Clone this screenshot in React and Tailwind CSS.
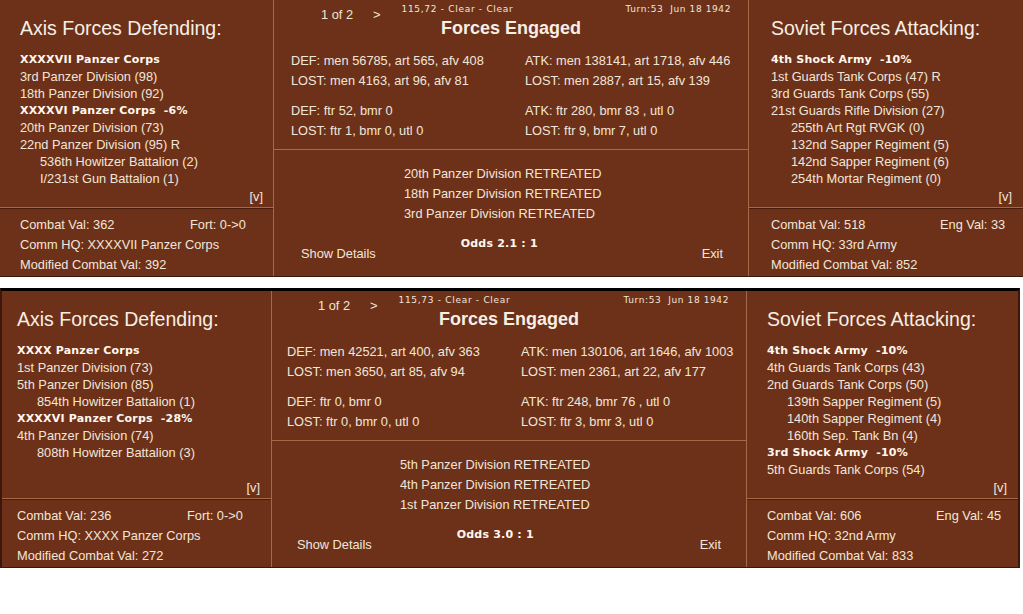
import React from "react";

const SANS = "font-['Liberation_Sans',Arial,sans-serif]";
const VERD = "font-['DejaVu_Sans',Verdana,sans-serif]";
const LIGHT = "border-[#a26a48]";

const data = [
  {
    a: true,
    def: {
      title: "Axis Forces Defending:",
      items: [
        { t: "XXXXVII Panzer Corps", b: 1 },
        { t: "3rd Panzer Division (98)" },
        { t: "18th Panzer Division (92)" },
        { t: "XXXXVI Panzer Corps  -6%", b: 1 },
        { t: "20th Panzer Division (73)" },
        { t: "22nd Panzer Division (95) R" },
        { t: "536th Howitzer Battalion (2)", i: 1 },
        { t: "I/231st Gun Battalion (1)", i: 1 },
      ],
      l1: "Combat Val: 362",
      l1b: "Fort: 0->0",
      hq: "Comm HQ: XXXXVII Panzer Corps",
      mod: "Modified Combat Val: 392",
    },
    atk: {
      title: "Soviet Forces Attacking:",
      items: [
        { t: "4th Shock Army  -10%", b: 1 },
        { t: "1st Guards Tank Corps (47) R" },
        { t: "3rd Guards Tank Corps (55)" },
        { t: "21st Guards Rifle Division (27)" },
        { t: "255th Art Rgt RVGK (0)", i: 1 },
        { t: "132nd Sapper Regiment (5)", i: 1 },
        { t: "142nd Sapper Regiment (6)", i: 1 },
        { t: "254th Mortar Regiment (0)", i: 1 },
      ],
      l1: "Combat Val: 518",
      l1b: "Eng Val: 33",
      hq: "Comm HQ: 33rd Army",
      mod: "Modified Combat Val: 852",
    },
    hex: "115,72 - Clear - Clear",
    stats: [
      ["DEF: men 56785, art 565, afv 408", "ATK: men 138141, art 1718, afv 446"],
      ["LOST: men 4163, art 96, afv 81", "LOST: men 2887, art 15, afv 139"],
      ["DEF: ftr 52, bmr 0", "ATK: ftr 280, bmr 83 , utl 0"],
      ["LOST: ftr 1, bmr 0, utl 0", "LOST: ftr 9, bmr 7, utl 0"],
    ],
    retreats: [
      "20th Panzer Division RETREATED",
      "18th Panzer Division RETREATED",
      "3rd Panzer Division RETREATED",
    ],
    odds: "Odds 2.1 : 1",
  },
  {
    a: false,
    def: {
      title: "Axis Forces Defending:",
      items: [
        { t: "XXXX Panzer Corps", b: 1 },
        { t: "1st Panzer Division (73)" },
        { t: "5th Panzer Division (85)" },
        { t: "854th Howitzer Battalion (1)", i: 1 },
        { t: "XXXXVI Panzer Corps  -28%", b: 1 },
        { t: "4th Panzer Division (74)" },
        { t: "808th Howitzer Battalion (3)", i: 1 },
      ],
      l1: "Combat Val: 236",
      l1b: "Fort: 0->0",
      hq: "Comm HQ: XXXX Panzer Corps",
      mod: "Modified Combat Val: 272",
    },
    atk: {
      title: "Soviet Forces Attacking:",
      items: [
        { t: "4th Shock Army  -10%", b: 1 },
        { t: "4th Guards Tank Corps (43)" },
        { t: "2nd Guards Tank Corps (50)" },
        { t: "139th Sapper Regiment (5)", i: 1 },
        { t: "140th Sapper Regiment (4)", i: 1 },
        { t: "160th Sep. Tank Bn (4)", i: 1 },
        { t: "3rd Shock Army  -10%", b: 1 },
        { t: "5th Guards Tank Corps (54)" },
      ],
      l1: "Combat Val: 606",
      l1b: "Eng Val: 45",
      hq: "Comm HQ: 32nd Army",
      mod: "Modified Combat Val: 833",
    },
    hex: "115,73 - Clear - Clear",
    stats: [
      ["DEF: men 42521, art 400, afv 363", "ATK: men 130106, art 1646, afv 1003"],
      ["LOST: men 3650, art 85, afv 94", "LOST: men 2361, art 22, afv 177"],
      ["DEF: ftr 0, bmr 0", "ATK: ftr 248, bmr 76 , utl 0"],
      ["LOST: ftr 0, bmr 0, utl 0", "LOST: ftr 3, bmr 3, utl 0"],
    ],
    retreats: [
      "5th Panzer Division RETREATED",
      "4th Panzer Division RETREATED",
      "1st Panzer Division RETREATED",
    ],
    odds: "Odds 3.0 : 1",
  },
];

function Item({ it }) {
  if (it.b) {
    return (
      <div
        className={`${VERD} whitespace-pre text-[11px] font-bold leading-[17px] tracking-[0.2px] text-[#fff7ee]`}
      >
        {it.t}
      </div>
    );
  }
  return (
    <div
      className={`${SANS} whitespace-pre text-[12.8px] leading-[17px] ${it.i ? "pl-[20px]" : ""}`}
    >
      {it.t}
    </div>
  );
}

function Side({ d, w, pl, vpr, w1 }) {
  return (
    <div className={`flex shrink-0 flex-col ${w}`}>
      <div className={`flex h-[208px] flex-col border-b ${LIGHT} ${pl}`}>
        <div className={`${SANS} pt-[16px] text-[19.5px] leading-[24px] text-[#f7eee4]`}>
          {d.title}
        </div>
        <div className="mt-[11px] flex flex-col">
          {d.items.map((it, k) => (
            <Item key={k} it={it} />
          ))}
        </div>
        <div
          className={`${SANS} mt-auto self-end pb-[2px] text-[12.8px] leading-[17px] ${vpr}`}
        >
          [v]
        </div>
      </div>
      <div
        className={`flex flex-1 flex-col border-t border-[#4a1c0a] pt-[6px] ${SANS} text-[12.8px] leading-[20px] ${pl}`}
      >
        <div className="flex whitespace-pre">
          <span className={w1}>{d.l1}</span>
          <span>{d.l1b}</span>
        </div>
        <div className="whitespace-pre">{d.hq}</div>
        <div className="whitespace-pre">{d.mod}</div>
      </div>
    </div>
  );
}

function Center({ p }) {
  const a = p.a;
  return (
    <div className={`flex w-[476px] shrink-0 flex-col border-x ${LIGHT}`}>
      <div className={`flex h-[150px] flex-col border-b ${LIGHT}`}>
        <div className="flex h-[17px] items-start">
          <div
            className={`${SANS} flex pt-[7px] text-[12.8px] leading-[16px] ${a ? "pl-[47px]" : "pl-[46px]"}`}
          >
            <span>1 of 2</span>
            <span className="ml-[20px]">&gt;</span>
          </div>
          <div
            className={`${VERD} ml-[21px] whitespace-pre pt-[3px] text-[9px] leading-[12px] tracking-[0.7px]`}
          >
            {p.hex}
          </div>
          <div className="flex-1" />
          <div
            className={`${VERD} whitespace-pre pr-[17px] pt-[3px] text-[9px] leading-[12px] tracking-[0.6px]`}
          >
            {"Turn:53  Jun 18 1942"}
          </div>
        </div>
        <div className={`${SANS} text-center text-[18px] font-bold leading-[22px] text-[#f7eee4]`}>
          Forces Engaged
        </div>
        <div
          className={`${SANS} mt-[12px] grid grid-cols-[234px_1fr] text-[12.8px] leading-[20px] ${a ? "pl-[17px]" : "pl-[15px]"}`}
        >
          <div className="whitespace-pre">{p.stats[0][0]}</div>
          <div className="whitespace-pre">{p.stats[0][1]}</div>
          <div className="whitespace-pre">{p.stats[1][0]}</div>
          <div className="whitespace-pre">{p.stats[1][1]}</div>
          <div className="mt-[10px] whitespace-pre">{p.stats[2][0]}</div>
          <div className="mt-[10px] whitespace-pre">{p.stats[2][1]}</div>
          <div className="whitespace-pre">{p.stats[3][0]}</div>
          <div className="whitespace-pre">{p.stats[3][1]}</div>
        </div>
      </div>
      <div className="flex flex-1 flex-col">
        <div
          className={`${SANS} flex flex-col pt-[14px] text-[12.8px] leading-[20px] ${a ? "pl-[130px]" : "pl-[128px]"}`}
        >
          {p.retreats.map((r) => (
            <div key={r} className="whitespace-pre">
              {r}
            </div>
          ))}
        </div>
        <div className="flex items-start">
          <div
            className={`${SANS} mt-[20px] text-[12.8px] leading-[20px] ${a ? "pl-[27px]" : "pl-[25px]"}`}
          >
            Show Details
          </div>
          <div
            className={`${VERD} ml-[85px] mt-[11px] whitespace-pre text-[11px] font-bold leading-[17px] tracking-[0.2px] text-[#fff7ee]`}
          >
            {p.odds}
          </div>
          <div className={`${SANS} ml-auto mt-[20px] pr-[25px] text-[12.8px] leading-[20px]`}>
            Exit
          </div>
        </div>
      </div>
    </div>
  );
}

function Panel({ p }) {
  const a = p.a;
  return (
    <div
      className={
        a
          ? "flex h-[277px] w-[1023px] border-b border-b-[#3c170a] bg-[#6d3119] text-[#f1e6da]"
          : "flex h-[280px] w-[1020px] border-t-[3px] border-r-2 border-b border-l-2 border-t-black border-r-[#3d180a] border-b-[#3d180a] border-l-[#3d180a] bg-[#6d3119] text-[#f1e6da]"
      }
    >
      <Side
        d={p.def}
        w={a ? "w-[273px]" : "w-[269px]"}
        pl={a ? "pl-[20px]" : "pl-[15px]"}
        vpr={a ? "pr-[10px]" : "pr-[11px]"}
        w1="w-[170px]"
      />
      <Center p={p} />
      <Side
        d={p.atk}
        w="flex-1"
        pl={a ? "pl-[22px]" : "pl-[20px]"}
        vpr="pr-[11px]"
        w1="w-[169px]"
      />
    </div>
  );
}

export default function App() {
  return (
    <div className="min-h-screen w-full bg-white">
      <Panel p={data[0]} />
      <div className="h-[11px]" />
      <Panel p={data[1]} />
    </div>
  );
}
